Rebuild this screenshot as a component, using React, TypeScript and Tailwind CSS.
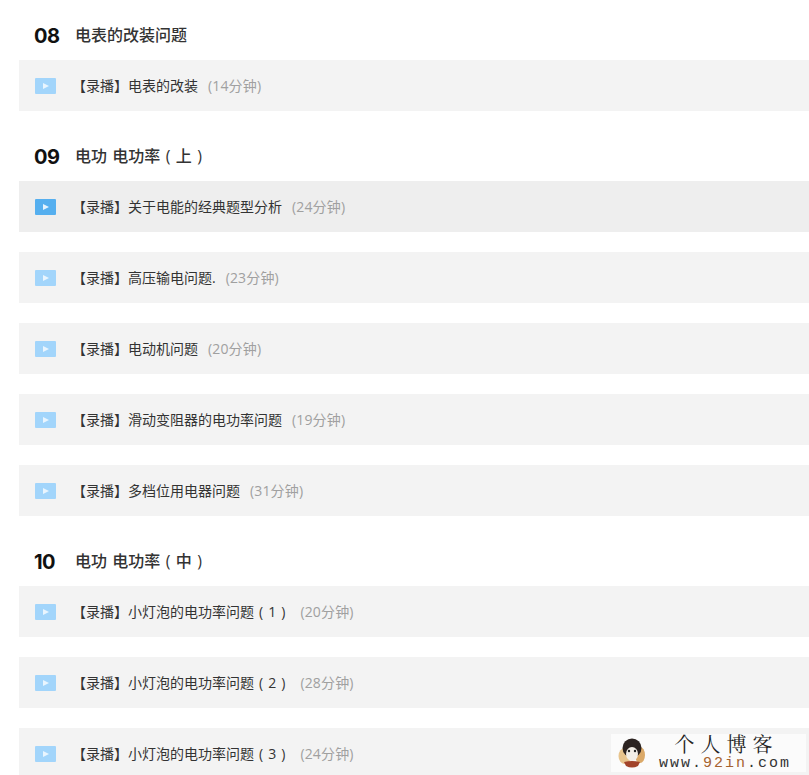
const FONT = "font-['Open_Sans','Noto_Sans_CJK_SC',sans-serif]";

function PlayIcon({ active }: { active?: boolean }) {
  return (
    <svg width="21" height="16" viewBox="0 0 21 16" className="shrink-0">
      <rect x="0" y="0" width="21" height="16" rx="1" fill={active ? "#55afef" : "#a2d5fb"} />
      <path d="M8 5 L14 8 L8 11 Z" fill={active ? "#e4f3fe" : "#e9f5fe"} />
    </svg>
  );
}

function Row({ title, time, active }: { title: string; time: string; active?: boolean }) {
  return (
    <div className={`ml-[19px] mb-5 h-[51px] flex items-center pl-4 ${active ? "bg-[#eeeeee]" : "bg-[#f3f3f3]"}`}>
      <PlayIcon active={active} />
      <span className="ml-4 text-sm text-[#333333] whitespace-pre [word-spacing:1.4px]">【录播】{title}</span>
      <span className="ml-2.5 text-sm text-[#a0a0a0] tracking-[0.15px] whitespace-nowrap">({time})</span>
    </div>
  );
}

function Heading({ no, title }: { no: string; title: string }) {
  return (
    <div className="ml-[34px] h-[50px] flex items-center">
      <span className="w-[42px] mt-[2px] font-['Inter',sans-serif] text-xl font-bold tracking-[-0.5px] text-[#111111]">{no}</span>
      <span className="-ml-px text-base font-medium text-[#333333] [word-spacing:1.2px]">{title}</span>
    </div>
  );
}

export default function App() {
  return (
    <div className={`relative h-[775px] w-[809px] overflow-hidden bg-white pt-2.5 ${FONT}`}>
      <Heading no="08" title="电表的改装问题" />
      <Row title="电表的改装" time="14分钟" />
      <Heading no="09" title="电功 电功率 ( 上 )" />
      <Row title="关于电能的经典题型分析" time="24分钟" active />
      <Row title="高压输电问题." time="23分钟" />
      <Row title="电动机问题" time="20分钟" />
      <Row title="滑动变阻器的电功率问题" time="19分钟" />
      <Row title="多档位用电器问题" time="31分钟" />
      <Heading no="10" title="电功 电功率 ( 中 )" />
      <Row title="小灯泡的电功率问题 ( 1 ) " time="20分钟" />
      <Row title="小灯泡的电功率问题 ( 2 ) " time="28分钟" />
      <Row title="小灯泡的电功率问题 ( 3 ) " time="24分钟" />

      <div className="absolute left-[611px] top-[734px] w-[195px] h-[38px] bg-[#fbfbfb] flex items-center font-['Liberation_Serif','Noto_Serif_CJK_SC',serif]">
        <svg width="28" height="32" viewBox="0 0 28 32" className="ml-[7px] shrink-0">
          <ellipse cx="7" cy="19" rx="6.5" ry="8" fill="#e8c48c" />
          <ellipse cx="22" cy="18" rx="5" ry="8" fill="#dba968" />
          <circle cx="14" cy="11" r="9.5" fill="#2c2320" />
          <ellipse cx="14" cy="17" rx="6" ry="7" fill="#f3eee6" />
          <circle cx="11" cy="14" r="1.2" fill="#222" />
          <circle cx="17" cy="14" r="1.2" fill="#222" />
          <path d="M6 25 Q14 23 22 25 L20 29 Q14 32 8 29 Z" fill="#a2432a" />
        </svg>
        <div className="ml-[12px] flex flex-col items-center w-[134px]">
          <span className="text-[20px] tracking-[6px] text-[#222222] leading-[22px] pl-[3px]">个人博客</span>
          <span className="font-['Liberation_Mono',monospace] text-[15px] tracking-[2px] text-[#333333] leading-[16px] whitespace-nowrap">
            www.<span className="text-[#a5622f]">92in</span>.com
          </span>
        </div>
      </div>
    </div>
  );
}
